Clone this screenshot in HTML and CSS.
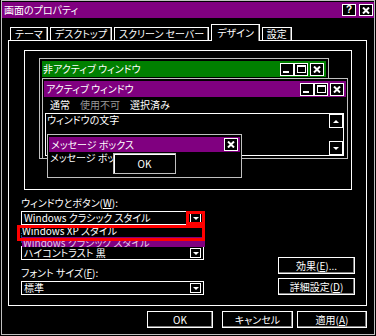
FILE: index.html
```html
<!doctype html>
<html lang="ja">
  <head>
    <meta charset="UTF-8" />
    <meta name="viewport" content="width=device-width, initial-scale=1.0" />
    <title>画面のプロパティ</title>
    <link rel="stylesheet" href="styles.css">
  </head>

  <body>
    <div class="window">
      <div class="titlebar">
        <span class="title">画面のプロパティ</span>
        <div class="caption-buttons">
          <span class="cap-btn help">?</span>
          <span class="cap-btn">
            <svg width="8" height="7" viewBox="0 0 8 7"><path d="M1 0.5L7 6.5M7 0.5L1 6.5" stroke="#fff" stroke-width="2" fill="none" /></svg>
          </span>
        </div>
      </div>

      <div class="tabs">
        <span class="tab">テーマ</span>
        <span class="tab">デスクトップ</span>
        <span class="tab">スクリーン セーバー</span>
        <span class="tab selected">デザイン</span>
        <span class="tab">設定</span>
      </div>

      <div class="panel">
        <div class="preview">
          <div class="pv-window inactive">
            <div class="pv-titlebar green">
              <span>非アクティブ ウィンドウ</span>
              <div class="pv-buttons">
                <span class="pv-btn"><i class="glyph-min"></i></span>
                <span class="pv-btn"><i class="glyph-max"></i></span>
                <span class="pv-btn close">
                  <svg width="8" height="7" viewBox="0 0 8 7"><path d="M1 0.5L7 6.5M7 0.5L1 6.5" stroke="#fff" stroke-width="2" fill="none" /></svg>
                </span>
              </div>
            </div>
          </div>

          <div class="pv-window active">
            <div class="pv-titlebar purple">
              <span>アクティブ ウィンドウ</span>
              <div class="pv-buttons">
                <span class="pv-btn"><i class="glyph-min"></i></span>
                <span class="pv-btn"><i class="glyph-max"></i></span>
                <span class="pv-btn close">
                  <svg width="8" height="7" viewBox="0 0 8 7"><path d="M1 0.5L7 6.5M7 0.5L1 6.5" stroke="#fff" stroke-width="2" fill="none" /></svg>
                </span>
              </div>
            </div>
            <div class="pv-menu">
              <span>通常</span>
              <span class="disabled">使用不可</span>
              <span>選択済み</span>
            </div>
            <div class="pv-textarea">
              <span class="pv-text">ウィンドウの文字</span>
              <div class="pv-scroll">
                <span class="scroll-btn"><i class="tri-up"></i></span>
                <span class="scroll-btn"><i class="tri-down"></i></span>
              </div>
            </div>
          </div>

          <div class="pv-window msgbox">
            <div class="pv-titlebar purple">
              <span>メッセージ ボックス</span>
              <span class="pv-btn close">
                <svg width="8" height="7" viewBox="0 0 8 7"><path d="M1 0.5L7 6.5M7 0.5L1 6.5" stroke="#fff" stroke-width="2" fill="none" /></svg>
              </span>
            </div>
            <p class="pv-message">メッセージ ボックス</p>
            <span class="pv-ok">OK</span>
          </div>
        </div>

        <div class="settings">
          <div class="fields">
            <div class="field">
              <label>ウィンドウとボタン(<u>W</u>):</label>
              <div class="combo">
                <span>Windows クラシック スタイル</span>
                <span class="combo-arrow"><i class="tri-down"></i></span>
              </div>
              <ul class="dropdown">
                <li>Windows XP スタイル</li>
                <li class="current">Windows クラシック スタイル</li>
              </ul>
              <span class="mark mark-arrow"></span>
              <span class="mark mark-item"></span>
            </div>

            <div class="field">
              <label>配色(<u>C</u>):</label>
              <div class="combo">
                <span>ハイコントラスト 黒</span>
                <span class="combo-arrow"><i class="tri-down"></i></span>
              </div>
            </div>

            <div class="field">
              <label>フォント サイズ(<u>F</u>):</label>
              <div class="combo">
                <span>標準</span>
                <span class="combo-arrow"><i class="tri-down"></i></span>
              </div>
            </div>
          </div>

          <div class="side-buttons">
            <button class="btn">効果(<u>E</u>)...</button>
            <button class="btn">詳細設定(<u>D</u>)</button>
          </div>
        </div>
      </div>

      <div class="dialog-buttons">
        <button class="btn btn-ok">OK</button>
        <button class="btn btn-cancel">キャンセル</button>
        <button class="btn btn-apply">適用(<u>A</u>)</button>
      </div>
    </div>
  </body>
</html>
```

FILE: styles.css
```css
* {
  margin: 0;
  padding: 0;
  box-sizing: border-box;
}

body {
  width: 376px;
  height: 336px;
  overflow: hidden;
  background-color: #000;
  color: #fff;
  font-family: 'Noto Sans CJK JP', sans-serif;
  font-size: 10px;
  line-height: 12px;
  font-feature-settings: 'palt';
}

button {
  font: inherit;
  color: inherit;
  background: none;
}

u {
  text-underline-offset: 1px;
}

.window {
  margin: 0 1px;
  height: 335px;
  border: 1px solid #c0c0c0;
  padding-top: 1px;
}

/* title bar */
.titlebar {
  display: flex;
  align-items: center;
  justify-content: space-between;
  height: 16px;
  padding: 0 1px 0 2px;
  background-color: #800080;
}

.caption-buttons {
  display: flex;
  gap: 3px;
}

.cap-btn {
  display: flex;
  align-items: center;
  justify-content: center;
  width: 14px;
  height: 12px;
  border: 1px solid #fff;
  background-color: #000;
}

.cap-btn.help {
  font-family: 'Liberation Sans', sans-serif;
  font-weight: 700;
  font-size: 10px;
}

/* tabs */
.tabs {
  position: relative;
  z-index: 1;
  display: flex;
  align-items: flex-end;
  gap: 2px;
  height: 16px;
  margin-top: 6px;
  padding-left: 8px;
}

.tab {
  height: 13px;
  padding: 0 4px;
  border: 1px solid #fff;
  border-bottom: 0;
  box-shadow: inset -1px 0 0 #808080;
  background-color: #000;
  line-height: 11px;
}

.tab.selected {
  height: 17px;
  margin-bottom: -1px;
  padding: 2px 5px 0;
}

.panel {
  width: 359px;
  height: 266px;
  margin-left: 6px;
  padding-top: 9px;
  border: 1px solid #fff;
}

/* preview */
.preview {
  position: relative;
  width: 328px;
  height: 140px;
  margin-left: 15px;
  border: 1px solid #fff;
}

.pv-window {
  position: absolute;
  border: 1px solid #c0c0c0;
  background-color: #000;
}

.pv-window.inactive {
  left: 14px;
  top: 7px;
  width: 290px;
  height: 101px;
  padding: 2px;
}

.pv-window.active {
  left: 17px;
  top: 27px;
  width: 306px;
  height: 81px;
  padding: 2px 1px;
  display: flex;
  flex-direction: column;
}

.pv-window.msgbox {
  left: 22px;
  top: 83px;
  width: 195px;
  height: 44px;
  padding: 2px 1px;
}

.pv-titlebar {
  display: flex;
  align-items: center;
  justify-content: space-between;
  height: 16px;
  padding: 0 2px;
}

.pv-titlebar.green {
  background-color: #008000;
  padding-left: 1px;
}

.pv-titlebar.purple {
  background-color: #800080;
}

.msgbox .pv-titlebar {
  height: 15px;
}

.pv-buttons {
  display: flex;
}

.pv-btn {
  display: flex;
  align-items: center;
  justify-content: center;
  width: 14px;
  height: 13px;
  border: 1px solid #fff;
  background-color: #000;
}

.pv-btn.close {
  margin-left: 2px;
}

.glyph-min {
  width: 6px;
  height: 2px;
  margin: 6px 3px 0 0;
  background-color: #fff;
}

.glyph-max {
  width: 9px;
  height: 8px;
  border: 1px solid #fff;
  border-top-width: 2px;
}

.pv-menu {
  display: flex;
  align-items: center;
  gap: 10px;
  height: 16px;
  padding-left: 6px;
}

.pv-menu .disabled {
  color: #999;
}

.pv-textarea {
  flex: 1;
  display: flex;
  justify-content: space-between;
  margin: 0 2px 0 1px;
  border: 1px solid #fff;
}

.pv-text {
  padding-left: 1px;
}

.pv-scroll {
  display: flex;
  flex-direction: column;
  justify-content: space-between;
}

.scroll-btn {
  display: flex;
  align-items: center;
  justify-content: center;
  width: 14px;
  height: 14px;
  border: 1px solid #fff;
}

.tri-up,
.tri-down {
  width: 0;
  height: 0;
  border-left: 3px solid transparent;
  border-right: 3px solid transparent;
}

.tri-up {
  border-bottom: 3px solid #fff;
}

.tri-down {
  border-top: 3px solid #fff;
}

.pv-message {
  padding-left: 1px;
  white-space: nowrap;
}

.pv-ok {
  position: absolute;
  left: 65px;
  top: 18px;
  width: 63px;
  height: 21px;
  display: flex;
  align-items: center;
  justify-content: center;
  border: 1px solid #c0c0c0;
  box-shadow: inset 1px 1px 0 #fff;
  background-color: #000;
}

/* settings */
.settings {
  display: flex;
  justify-content: space-between;
  align-items: flex-end;
  margin-top: 6px;
  padding: 0 11px 0 12px;
}

.fields {
  display: flex;
  flex-direction: column;
  gap: 6px;
  width: 183px;
}

.field {
  position: relative;
}

.field label {
  display: block;
  height: 13px;
  line-height: 13px;
  margin-bottom: 2px;
  white-space: nowrap;
}

.combo {
  display: flex;
  align-items: center;
  justify-content: space-between;
  height: 14px;
  padding: 0 2px;
  border: 1px solid #fff;
  white-space: nowrap;
}

.combo-arrow {
  display: flex;
  align-items: center;
  justify-content: center;
  width: 11px;
  height: 10px;
  border: 1px solid #fff;
}

.dropdown {
  position: absolute;
  z-index: 2;
  left: 1px;
  top: 29px;
  width: 183px;
  list-style: none;
  background-color: #000;
}

.dropdown li {
  height: 12px;
  white-space: nowrap;
}

.dropdown li.current {
  height: 10px;
  padding-left: 1px;
  overflow: hidden;
  background-color: #800080;
  color: #e8c8e8;
}

.mark {
  position: absolute;
  z-index: 3;
  border: 3px solid #f00;
}

.mark-arrow {
  left: 165px;
  top: 15px;
  width: 19px;
  height: 14px;
}

.mark-item {
  left: -4px;
  top: 29px;
  width: 188px;
  height: 16px;
}

.side-buttons {
  display: flex;
  flex-direction: column;
  gap: 4px;
  width: 77px;
}

.btn {
  display: flex;
  align-items: center;
  justify-content: center;
  height: 17px;
  border: 1px solid #fff;
  box-shadow: inset -1px -1px 0 #808080;
  background-color: #000;
  white-space: nowrap;
}

.dialog-buttons {
  display: flex;
  justify-content: flex-end;
  gap: 4px;
  margin-top: 5px;
  padding-right: 7px;
}

.btn-ok {
  width: 66px;
  margin-right: 5px;
}

.btn-cancel {
  width: 71px;
}

.btn-apply {
  width: 70px;
}
```
